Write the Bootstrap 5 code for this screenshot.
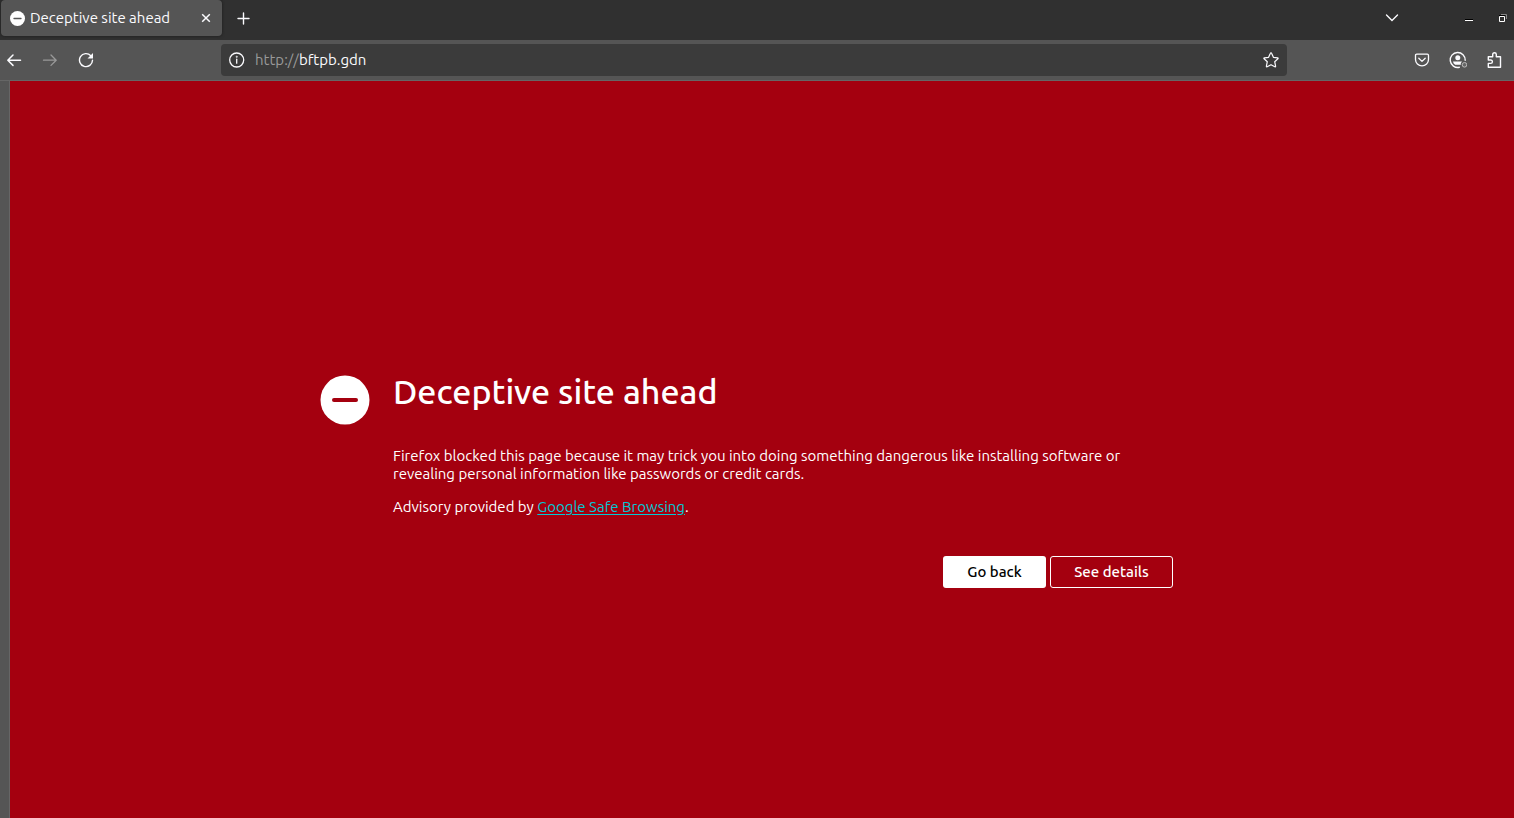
<!DOCTYPE html>
<html lang="en">
<head>
<meta charset="utf-8">
<meta name="viewport" content="width=device-width, initial-scale=1">
<title>Deceptive site ahead</title>
<link href="https://cdn.jsdelivr.net/npm/bootstrap@5.3.0/dist/css/bootstrap.min.css" rel="stylesheet">
<style>
  body { font-family: Ubuntu, "Noto Sans", sans-serif; font-size: 15px; background: #555; color: #fff; }
  svg { display: block; flex: none; }
  .tab-strip { height: 40px; background: #303030; padding-left: 1px; }
  .site-tab { width: 221px; height: 36px; background: #555; border-radius: 4px; padding: 0 9px 0 8px; box-shadow: 0 0 3px #1a1a1a; }
  .site-tab a { color: #fbfbfe; gap: 5px; }
  .tool { width: 36px; height: 32px; padding: 0; border: 0; background: none; color: #fbfbfe; display: flex; align-items: center; justify-content: center; }
  .tool:disabled { color: #999; }
  .tool-tab { width: 14px; }
  .tool-first { width: 28px; }
  .tool-inner { width: 32px; }
  .tool-window { width: 22px; }
  .tab-actions { padding-top: 2px; }
  .toolbar { height: 41px; background: #555; border-bottom: 1px solid #666; padding-top: 4px; }
  .tools-left { width: 221px; }
  .tools-right { width: 227px; padding-right: 2px; }
  .address { height: 32px; background: #3b3b3b; border-radius: 4px; }
  .address label { color: #999; padding-left: 2px; }
  .address input { color: #fbfbfe; background: none; border: 0; outline: 0; padding: 0; }
  .window-body { border-left: 10px solid #555; }
  .warning-page { background: #a4000f; padding: 292px 31px 32px 0; box-shadow: 0 0 0 1px #666; clip-path: inset(0 0 0 -1px); }
  .notice { width: 100%; max-width: 853px; gap: 23px; }
  .notice-icon { margin-top: 1px; }
  .notice h1 { font-size: 34px; line-height: 36px; font-weight: 500; margin-bottom: 38px; }
  .notice p { max-width: 740px; line-height: 18px; margin-bottom: 15px; }
  .notice a { color: #00c8d7; text-underline-offset: 2px; }
  .notice-actions { gap: 4px; margin-top: 40px; }
  .notice-actions .btn { height: 32px; font-size: 15px; line-height: 18px; font-weight: 500; border-radius: 3px; padding: 0; }
  .btn-back { width: 103px; background: #fff; color: #000; }
  .btn-details { width: 123px; border-color: #fff; color: #fff; }
</style>
</head>
<body class="d-flex flex-column min-vh-100">
<header>
  <div class="tab-strip d-flex">
    <div class="site-tab d-flex align-items-center justify-content-between">
      <a href="#" class="d-flex align-items-center text-decoration-none text-nowrap">
        <svg width="16" height="16" viewBox="0 0 16 16"><circle cx="8.500" cy="8.500" r="7.500" fill="#fff"/><path d="M5 8.500h7" stroke="#555" stroke-width="1.300" stroke-linecap="round"/></svg>
        Deceptive site ahead
      </a>
      <button class="tool tool-tab" aria-label="Close tab"><svg width="10" height="10" viewBox="0 0 10 10" stroke="currentColor" stroke-width="1.500"><path d="M1.200 1.200l7.600 7.600M8.800 1.200L1.200 8.800"/></svg></button>
    </div>
    <div class="tab-actions d-flex flex-grow-1">
      <button class="tool ms-1" aria-label="New tab"><svg width="14" height="14" viewBox="0 0 14 14" stroke="currentColor" stroke-width="1.400" stroke-linecap="round"><path d="M6.500 2v11M1 7.500h11"/></svg></button>
      <button class="tool ms-auto me-5" aria-label="List all tabs"><svg width="14" height="14" viewBox="0 0 14 14" fill="none" stroke="currentColor" stroke-width="1.400" stroke-linecap="round"><path d="M1.500 4L7 9.500 12.500 4"/></svg></button>
      <button class="tool tool-window me-2" aria-label="Minimize"><svg width="10" height="10" viewBox="0 0 10 10"><path d="M1 6h8v1H1z" fill="#000"/><path d="M1 7h8v1H1z" fill="#fff"/></svg></button>
      <button class="tool tool-window ms-1" aria-label="Restore"><svg width="10" height="10" viewBox="0 0 10 10" fill="none"><path d="M3 1.500h5.500V6" stroke="#888"/><path d="M1 2.500h6" stroke="#000"/><path d="M1.500 3.500h5v5h-5z" stroke="#fff"/></svg></button>
    </div>
  </div>
  <nav class="toolbar d-flex" aria-label="Navigation">
    <div class="tools-left d-flex flex-shrink-0">
      <button class="tool tool-first" aria-label="Back"><svg width="16" height="16" viewBox="0 0 16 16" fill="none" stroke="currentColor" stroke-width="1.500" stroke-linecap="round" stroke-linejoin="round"><path d="M14.500 8.200H1.800M7 3L1.800 8.200 7 13.400"/></svg></button>
      <button class="tool ms-1" aria-label="Forward" disabled><svg width="16" height="16" viewBox="0 0 16 16" fill="none" stroke="currentColor" stroke-width="1.300" stroke-linecap="round" stroke-linejoin="round"><path d="M1.500 8.200h12.700M9 3l5.200 5.200L9 13.400"/></svg></button>
      <button class="tool" aria-label="Reload"><svg width="16" height="16" viewBox="0 0 16 16"><path d="M12.800 3.700A6.500 6.500 0 1 0 14.500 8.200" fill="none" stroke="currentColor" stroke-width="1.400" stroke-linecap="round"/><path d="M15 1v5.500H9.500z" fill="currentColor"/></svg></button>
    </div>
    <div class="address d-flex align-items-center flex-grow-1">
      <button class="tool tool-inner" aria-label="Site information"><svg width="16" height="16" viewBox="0 0 16 16" fill="none" stroke="currentColor" stroke-width="1.300" stroke-linecap="round"><circle cx="7.700" cy="8" r="7"/><path d="M7.700 7.200v4"/><circle cx="7.700" cy="4.800" r=".3"/></svg></button>
      <label for="url">http://</label><input id="url" type="text" class="flex-grow-1" value="bftpb.gdn" spellcheck="false">
      <button class="tool tool-inner" aria-label="Bookmark this page"><svg width="16" height="16" viewBox="0 0 16 16" fill="none" stroke="currentColor" stroke-width="1.200" stroke-linejoin="round"><path d="M8 .9q.5 0 .7.500l1.700 3.900 4.200.5q.9.300.3 1L11.700 9.700l.9 4.500q0 .9-.8.600L8 12.700l-3.800 2.100q-.8.300-.8-.6l.9-4.500L1.100 6.800q-.6-.7.3-1l4.200-.5 1.700-3.900q.2-.5.7-.5z"/></svg></button>
    </div>
    <div class="tools-right d-flex justify-content-end flex-shrink-0">
      <button class="tool" aria-label="Save to Pocket"><svg width="16" height="16" viewBox="0 0 16 16" fill="none" stroke="currentColor" stroke-width="1.300" stroke-linecap="round" stroke-linejoin="round"><path d="M2.700 2.200h10.600q1.200 0 1.200 1.200v4.200a6.500 6.300 0 0 1-13 0V3.400q0-1.200 1.200-1.200z"/><path d="M4.800 6.200L8 9.400 11.200 6.200"/></svg></button>
      <button class="tool" aria-label="Account"><svg width="18" height="18" viewBox="0 0 18 18"><path d="M16.200 9.300A7.500 7.500 0 1 0 10.300 16.300" fill="none" stroke="currentColor" stroke-width="1.400" stroke-linecap="round"/><circle cx="8.800" cy="6.800" r="2.500" fill="currentColor"/><path d="M4 10.500h9l-1.200 1.700v1.600H6.200Q4.300 12.700 4 10.500z" fill="currentColor"/><circle cx="15.500" cy="13.800" r="2.300" fill="#666" stroke="#bbb"/></svg></button>
      <button class="tool" aria-label="Extensions"><svg width="16" height="16" viewBox="0 0 16 16" fill="none" stroke="currentColor" stroke-width="1.400" stroke-linejoin="round"><path d="M2.300 15.200V11.400H4.700a1.700 1.700 0 0 0 0-3.400H2.300V4.700H6.700V2.500a1.800 1.800 0 0 1 3.600 0V4.700H14.500V15.200z"/></svg></button>
    </div>
  </nav>
</header>
<div class="window-body d-flex flex-grow-1">
  <main class="warning-page d-flex justify-content-center align-items-start flex-grow-1">
    <section class="notice d-flex align-items-start">
      <svg class="notice-icon" width="50" height="52" viewBox="0 0 50 52"><circle cx="25" cy="26" r="24.500" fill="#fff"/><path d="M14 26h22" stroke="#a4000f" stroke-width="4" stroke-linecap="round"/></svg>
      <div class="flex-grow-1">
        <h1>Deceptive site ahead</h1>
        <p>Firefox blocked this page because it may trick you into doing something dangerous like installing software or revealing personal information like passwords or credit cards.</p>
        <p>Advisory provided by <a href="#">Google Safe Browsing</a>.</p>
        <div class="notice-actions d-flex justify-content-end">
          <button class="btn btn-back">Go back</button>
          <button class="btn btn-details">See details</button>
        </div>
      </div>
    </section>
  </main>
</div>
<script src="https://cdn.jsdelivr.net/npm/bootstrap@5.3.0/dist/js/bootstrap.bundle.min.js"></script>
</body>
</html>
